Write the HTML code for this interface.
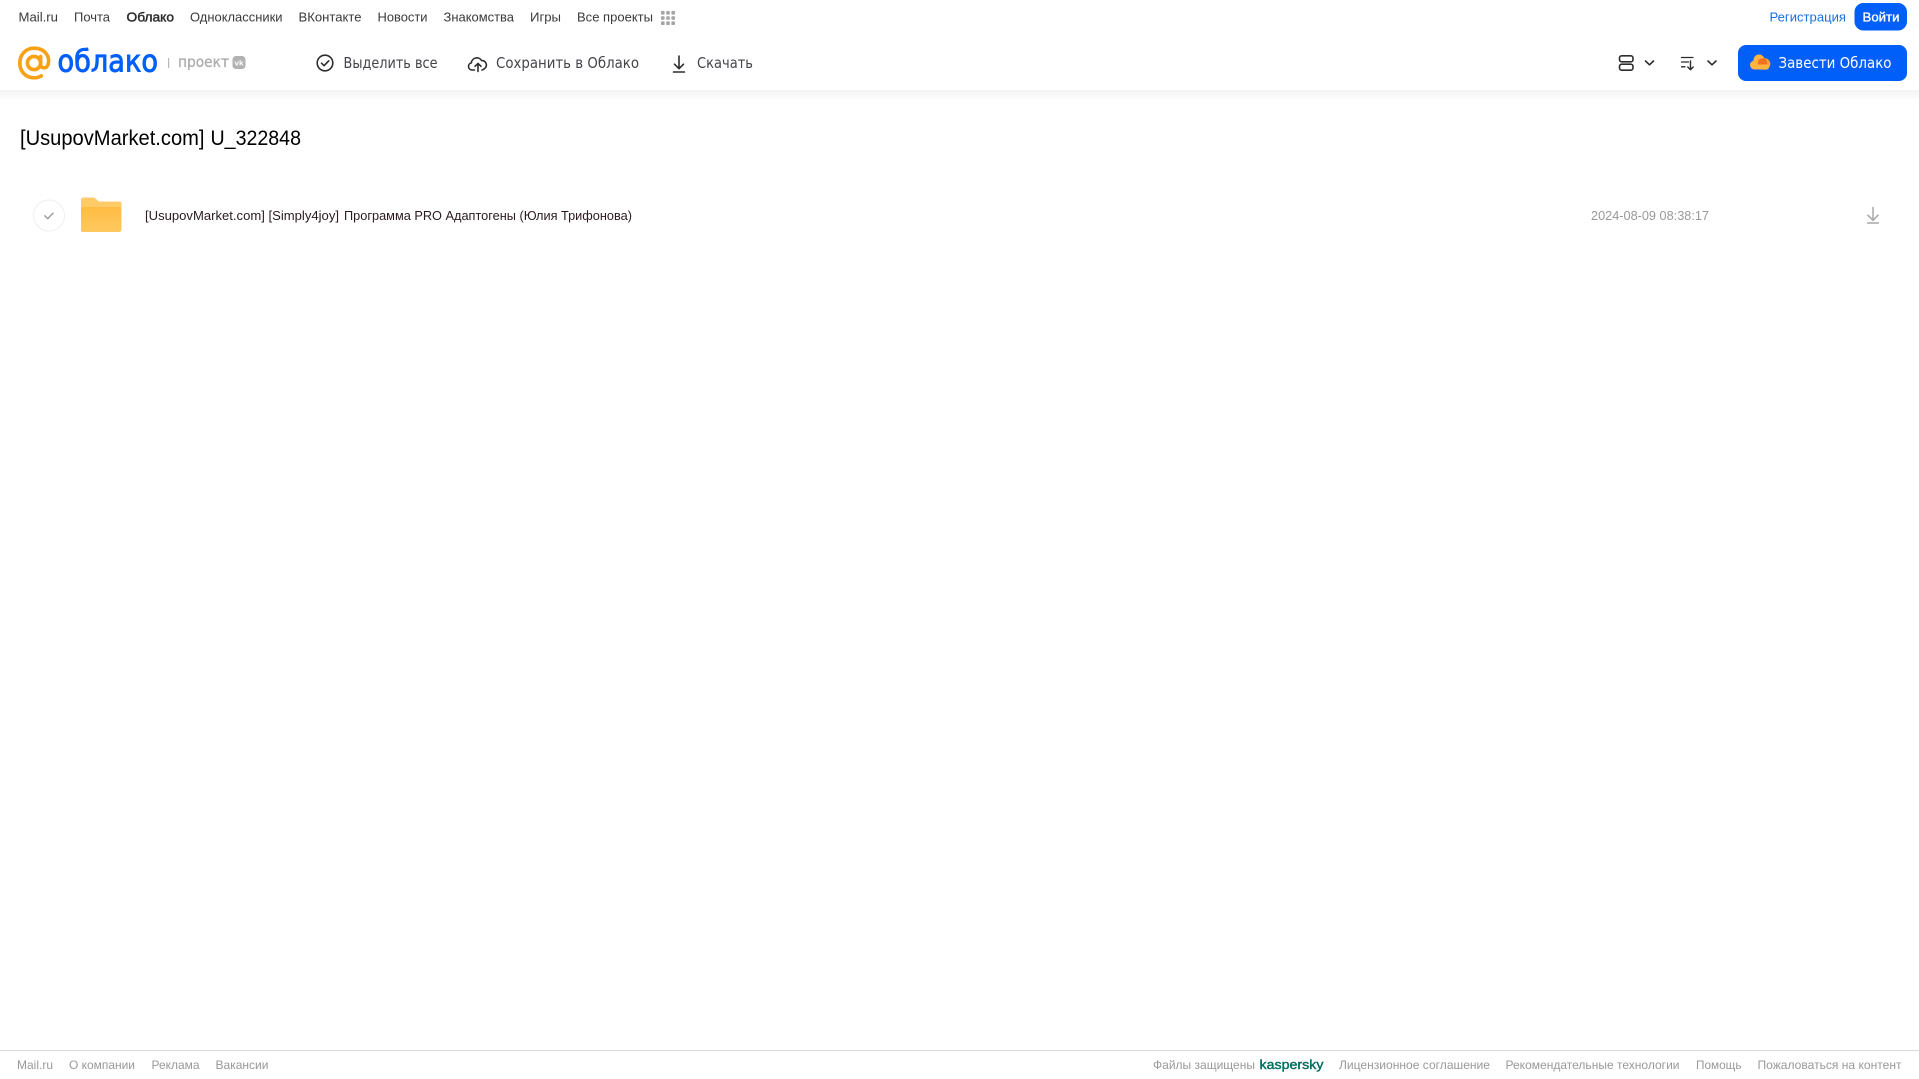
<!DOCTYPE html>
<html lang="ru"><head><meta charset="utf-8"><title>Облако</title>
<style>
html,body{margin:0;padding:0;background:#fff;width:1919px;height:1079px;overflow:hidden}
svg{display:block;font-family:"Liberation Sans",Arial,sans-serif}
.n{font-size:13px;fill:#3a3a3a}
.t{font-size:15px;fill:#44454a;font-family:"DejaVu Sans","Liberation Sans",sans-serif}
.f{font-size:12px;fill:#999}
.ic{fill:none;stroke:#2c2d2e;stroke-width:1.600;stroke-linecap:round;stroke-linejoin:round}
</style></head><body>
<svg width="1919" height="1079" viewBox="0 0 1919 1079" xmlns="http://www.w3.org/2000/svg">
<defs>
<linearGradient id="sh" x1="0" y1="0" x2="0" y2="1"><stop offset="0" stop-color="#f4f4f4"/><stop offset="1" stop-color="#fff"/></linearGradient>
<linearGradient id="fo" x1="0" y1="0" x2="0" y2="1"><stop offset="0" stop-color="#ffbc42"/><stop offset="1" stop-color="#ffc961"/></linearGradient>
</defs>
<rect x="0" y="90" width="1919" height="12" fill="url(#sh)"/>

<!-- top nav -->
<text class="n" x="18.500" y="21.500" textLength="39.500" lengthAdjust="spacingAndGlyphs">Mail.ru</text>
<text class="n" x="74" y="21.500" textLength="36" lengthAdjust="spacingAndGlyphs">Почта</text>
<text class="n" x="126.500" y="21.500" textLength="47.500" lengthAdjust="spacingAndGlyphs" style="fill:#2c2d2e;stroke:#2c2d2e;stroke-width:.45">Облако</text>
<text class="n" x="190" y="21.500" textLength="92.500" lengthAdjust="spacingAndGlyphs">Одноклассники</text>
<text class="n" x="298.500" y="21.500" textLength="63" lengthAdjust="spacingAndGlyphs">ВКонтакте</text>
<text class="n" x="377.500" y="21.500" textLength="50" lengthAdjust="spacingAndGlyphs">Новости</text>
<text class="n" x="443.500" y="21.500" textLength="70.500" lengthAdjust="spacingAndGlyphs">Знакомства</text>
<text class="n" x="530" y="21.500" textLength="31" lengthAdjust="spacingAndGlyphs">Игры</text>
<text class="n" x="577" y="21.500" textLength="76" lengthAdjust="spacingAndGlyphs">Все проекты</text>
<g fill="#a5a5a5">
<rect x="661" y="11" width="3.600" height="3.600" rx=".8"/><rect x="666.200" y="11" width="3.600" height="3.600" rx=".8"/><rect x="671.400" y="11" width="3.600" height="3.600" rx=".8"/>
<rect x="661" y="16.200" width="3.600" height="3.600" rx=".8"/><rect x="666.200" y="16.200" width="3.600" height="3.600" rx=".8"/><rect x="671.400" y="16.200" width="3.600" height="3.600" rx=".8"/>
<rect x="661" y="21.400" width="3.600" height="3.600" rx=".8"/><rect x="666.200" y="21.400" width="3.600" height="3.600" rx=".8"/><rect x="671.400" y="21.400" width="3.600" height="3.600" rx=".8"/>
</g>
<text x="1769.500" y="21.500" font-size="13" fill="#1a6fe0" textLength="76.500" lengthAdjust="spacingAndGlyphs">Регистрация</text>
<rect x="1854.500" y="3" width="52.500" height="27.500" rx="9" fill="#005ff9"/>
<text x="1862.500" y="21.500" font-size="13" fill="#fff" stroke="#fff" stroke-width=".35" textLength="37" lengthAdjust="spacingAndGlyphs">Войти</text>

<!-- logo -->
<g fill="none" stroke="#f9a114" stroke-width="3.600" stroke-linecap="round">
<circle cx="34" cy="63" r="6.600"/>
<path d="M40.600 56.500v8.200c0 3.600 5.600 4.600 7.300.300 2.700-7.600-2.300-16.800-13.900-16.800-8.300 0-14.200 6.500-14.200 14.800s5.900 14.800 14.200 14.800c2.800 0 5-.6 7.300-1.900"/>
</g>
<text x="57.500" y="71.500" font-size="30" fill="#005ff9" stroke="#005ff9" stroke-width=".9" font-family="'DejaVu Sans',sans-serif" textLength="100.500" lengthAdjust="spacingAndGlyphs">облако</text>
<rect x="168" y="58" width="1.200" height="10" fill="#b8b8b8"/>
<text x="178" y="67" font-size="15" fill="#acacac" stroke="#acacac" stroke-width=".3" font-family="'DejaVu Sans',sans-serif" textLength="51" lengthAdjust="spacingAndGlyphs">проект</text>
<rect x="232.500" y="56" width="13" height="13" rx="3.500" fill="#b2b2b2"/>
<text x="234.500" y="65.500" font-size="7.500" font-weight="700" fill="#fff" textLength="9" lengthAdjust="spacingAndGlyphs">vk</text>

<!-- toolbar -->
<circle class="ic" cx="325" cy="63" r="7.800"/>
<path class="ic" d="M321.500 63.200l2.600 2.500 4.600-4.900"/>
<text class="t" x="343.500" y="68" textLength="94" lengthAdjust="spacingAndGlyphs">Выделить все</text>

<path class="ic" d="M474.500 70h-2.300a3.600 3.600 0 0 1-.9-7.100 5.600 5.600 0 0 1 10.400-2.300 4.400 4.400 0 0 1 3 7.800c-.6.600-1.500 1.300-2.700 1.600"/>
<path class="ic" d="M478 71.500V63.500M475 66.300l3-2.900 3 2.900"/>
<text class="t" x="496" y="68" textLength="143" lengthAdjust="spacingAndGlyphs">Сохранить в Облако</text>

<path class="ic" d="M679 56V68.500M674.500 64.200l4.500 4.500 4.500-4.500M673.500 72h11"/>
<text class="t" x="697" y="68" textLength="56" lengthAdjust="spacingAndGlyphs">Скачать</text>

<rect class="ic" x="1619.500" y="55.800" width="13.500" height="6" rx="2.200"/>
<rect class="ic" x="1619.500" y="64.200" width="13.500" height="6" rx="2.200"/>
<path class="ic" d="M1645.500 61l4 3.800 4-3.800"/>
<path class="ic" d="M1681.500 57.500h11.500M1681.500 62h7M1681.500 66.800h3.500" style="stroke-width:1.300"/>
<path class="ic" style="stroke-width:1.400" d="M1690.500 61V69.500M1687.800 67l2.700 2.700 2.700-2.700"/>
<path class="ic" d="M1708 61l4 3.800 4-3.800"/>

<rect x="1738" y="45" width="169" height="36" rx="8" fill="#005ff9"/>
<circle cx="1759" cy="60" r="5.500" fill="#ffb340"/>
<circle cx="1754.500" cy="65" r="4.500" fill="#ffb340"/>
<circle cx="1764.500" cy="64" r="5.800" fill="#ffa436"/>
<circle cx="1762.500" cy="63" r="4.800" fill="#f5701f"/>
<rect x="1753" y="64.500" width="16" height="5" rx="2.500" fill="#ffb340"/>
<text x="1778.500" y="68" font-size="15" fill="#fff" font-family="'DejaVu Sans',sans-serif" textLength="113" lengthAdjust="spacingAndGlyphs">Завести Облако</text>

<!-- title -->
<text x="20" y="145" font-size="21" fill="#000" textLength="184.500" lengthAdjust="spacingAndGlyphs">[UsupovMarket.com]</text>
<text x="210.500" y="145" font-size="21" fill="#000" textLength="90.500" lengthAdjust="spacingAndGlyphs">U_322848</text>

<!-- row -->
<circle cx="49" cy="215.500" r="15.500" fill="#fff" stroke="#eeeeee" stroke-width="1"/>
<path d="M44.800 215.800l2.900 2.800 5.300-5.500" fill="none" stroke="#9a9a9a" stroke-width="1.400" stroke-linecap="round" stroke-linejoin="round"/>
<path d="M81 200a2.500 2.500 0 0 1 2.500-2.500h9.500c1.500 0 2.300.6 3.200 1.600l2.500 2.400h20.800a2 2 0 0 1 2 2v26a2 2 0 0 1-2 2H83a2 2 0 0 1-2-2z" fill="#ffcb69"/>
<rect x="81" y="207" width="40" height="25" rx="2" fill="url(#fo)"/>
<text x="145" y="220" font-size="12.800" fill="#2a1a20" textLength="194" lengthAdjust="spacingAndGlyphs">[UsupovMarket.com] [Simply4joy]</text>
<text x="344" y="220" font-size="12.800" fill="#2a1a20" textLength="288" lengthAdjust="spacingAndGlyphs">Программа PRO Адаптогены (Юлия Трифонова)</text>
<text x="1591" y="220" font-size="12.500" fill="#999" textLength="118" lengthAdjust="spacingAndGlyphs">2024-08-09 08:38:17</text>
<path d="M1873 207v13M1867.500 214.800l5.500 5.500 5.500-5.500M1867 223h12" fill="none" stroke="#a8a8a8" stroke-width="1.500"/>

<!-- footer -->
<rect x="0" y="1050" width="1919" height="1" fill="#d8d8d8"/>
<text class="f" x="17" y="1069" textLength="36" lengthAdjust="spacingAndGlyphs">Mail.ru</text>
<text class="f" x="69" y="1069" textLength="66" lengthAdjust="spacingAndGlyphs">О компании</text>
<text class="f" x="151.500" y="1069" textLength="48" lengthAdjust="spacingAndGlyphs">Реклама</text>
<text class="f" x="215.500" y="1069" textLength="53" lengthAdjust="spacingAndGlyphs">Вакансии</text>
<text class="f" x="1153" y="1069" textLength="102" lengthAdjust="spacingAndGlyphs">Файлы защищены</text>
<text x="1259.500" y="1069" font-size="13" fill="#006d5c" stroke="#006d5c" stroke-width=".4" textLength="64" lengthAdjust="spacingAndGlyphs">kaspersky</text>
<text class="f" x="1339" y="1069" textLength="151" lengthAdjust="spacingAndGlyphs">Лицензионное соглашение</text>
<text class="f" x="1505.500" y="1069" textLength="174" lengthAdjust="spacingAndGlyphs">Рекомендательные технологии</text>
<text class="f" x="1696" y="1069" textLength="45.500" lengthAdjust="spacingAndGlyphs">Помощь</text>
<text class="f" x="1757.500" y="1069" textLength="144" lengthAdjust="spacingAndGlyphs">Пожаловаться на контент</text>
</svg>
</body></html>
